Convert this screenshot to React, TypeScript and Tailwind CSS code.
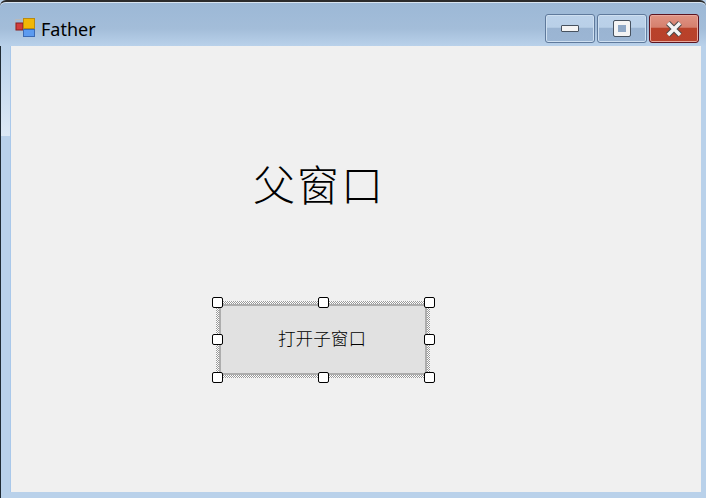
const cjk = "font-['Liberation_Serif','Noto_Sans_CJK_SC',serif]";

function AppIcon() {
  return (
    <svg width="21" height="21" viewBox="0 0 21 21" className="mb-[3px] shrink-0">
      <rect x="0.5" y="2.5" width="10" height="10" fill="none" stroke="#b9b9b9" />
      <rect x="1" y="6" width="7" height="7" fill="#d23c3c" stroke="#8a1f1f" />
      <rect x="8.5" y="1.5" width="11" height="10" fill="#f2b705" stroke="#b98a10" />
      <rect x="8.5" y="12.5" width="11" height="7" fill="#5c9bf0" stroke="#3a6ab5" />
    </svg>
  );
}

function CaptionButton({ variant, children }: { variant: "normal" | "close"; children: React.ReactNode }) {
  return (
    <div
      className={
        variant === "close"
          ? "flex h-[29px] w-[50px] items-center justify-center rounded-[3px] border border-[#5c1420] bg-[linear-gradient(#e09484_0%,#d5806e_45%,#b9422a_50%,#b8412b_100%)] shadow-[inset_0_0_0_1px_#e8a89c]"
          : "flex h-[29px] w-[50px] items-center justify-center rounded-[3px] border border-[#5f7a9c] bg-[linear-gradient(#bcd2ea_0%,#b9d0e8_45%,#9ab4d2_50%,#9cb6d4_100%)] shadow-[inset_0_0_0_1px_#cfe0f1]"
      }
    >
      {children}
    </div>
  );
}

function Handle({ className }: { className: string }) {
  return <div className={`absolute h-[11px] w-[11px] rounded-[2px] border border-black bg-white ${className}`} />;
}

export default function App() {
  return (
    <div className="flex h-[498px] w-[706px] flex-col overflow-hidden bg-[#b9d1ea]">
      <div className="flex h-[46px] shrink-0 items-center justify-between rounded-t-[6px] border-t-2 border-[#2b2b2b] bg-[linear-gradient(#9cb8d6_0%,#a3bdd9_60%,#b9d1ea_100%)] pl-[15px] pr-[7px] shadow-[inset_0_1px_0_#d8e4f0]">
        <div className="flex items-center gap-[5px] pt-[10px]">
          <AppIcon />
          <span className="font-['Noto_Sans',sans-serif] text-[18px] leading-none text-black">Father</span>
        </div>
        <div className="flex gap-[2px] pt-[9px]">
          <CaptionButton variant="normal">
            <div className="h-[7px] w-[18px] rounded-[1px] border border-[#47525f] bg-[#f4f4f4]" />
          </CaptionButton>
          <CaptionButton variant="normal">
            <div className="h-[15px] w-[16px] rounded-[1px] border-[4px] border-[#f4f4f4] bg-[#8fa8c6] outline outline-1 outline-[#47525f]" />
          </CaptionButton>
          <CaptionButton variant="close">
            <svg width="18" height="16" viewBox="0 0 18 16">
              <path d="M3 2 L15 14 M15 2 L3 14" stroke="#4a4a4a" strokeWidth="5.5" />
              <path d="M3 2 L15 14 M15 2 L3 14" stroke="#f4f4f4" strokeWidth="3.5" />
            </svg>
          </CaptionButton>
        </div>
      </div>
      <div className="flex min-h-0 flex-1 flex-col border-l border-[#1f2a33]">
        <div className="flex min-h-0 flex-1">
          <div className="flex w-[10px] shrink-0 flex-col border-r border-[#a9c8ea]">
            <div className="h-[90px] bg-[linear-gradient(#b9d1ea,#dde9f5)]" />
          </div>
          <div className="flex flex-1 flex-col items-start bg-[#f0f0f0]">
            <h1 className={`${cjk} mt-[111px] ml-[242px] text-[42px] leading-[60px] font-light tracking-[2px] text-black`}>父窗口</h1>
            <div className="relative mt-[84px] ml-[205px] h-[77px] w-[214px] bg-[repeating-conic-gradient(#999999_0_25%,#ffffff_0_50%)] bg-[length:2px_2px] p-[3px]">
              <div className={`${cjk} flex h-full w-full items-center justify-center border-2 border-[#adadad] bg-[#e1e1e1] pr-[2px] text-[17.6px] font-light text-black`}>
                打开子窗口
              </div>
              <Handle className="left-[-4px] top-[-4px]" />
              <Handle className="left-[102px] top-[-4px]" />
              <Handle className="right-[-5px] top-[-4px]" />
              <Handle className="left-[-4px] top-[33px]" />
              <Handle className="right-[-5px] top-[33px]" />
              <Handle className="left-[-4px] bottom-[-5px]" />
              <Handle className="left-[102px] bottom-[-5px]" />
              <Handle className="right-[-5px] bottom-[-5px]" />
            </div>
          </div>
          <div className="w-[5px] shrink-0" />
        </div>
        <div className="h-[6px] shrink-0" />
      </div>
    </div>
  );
}
